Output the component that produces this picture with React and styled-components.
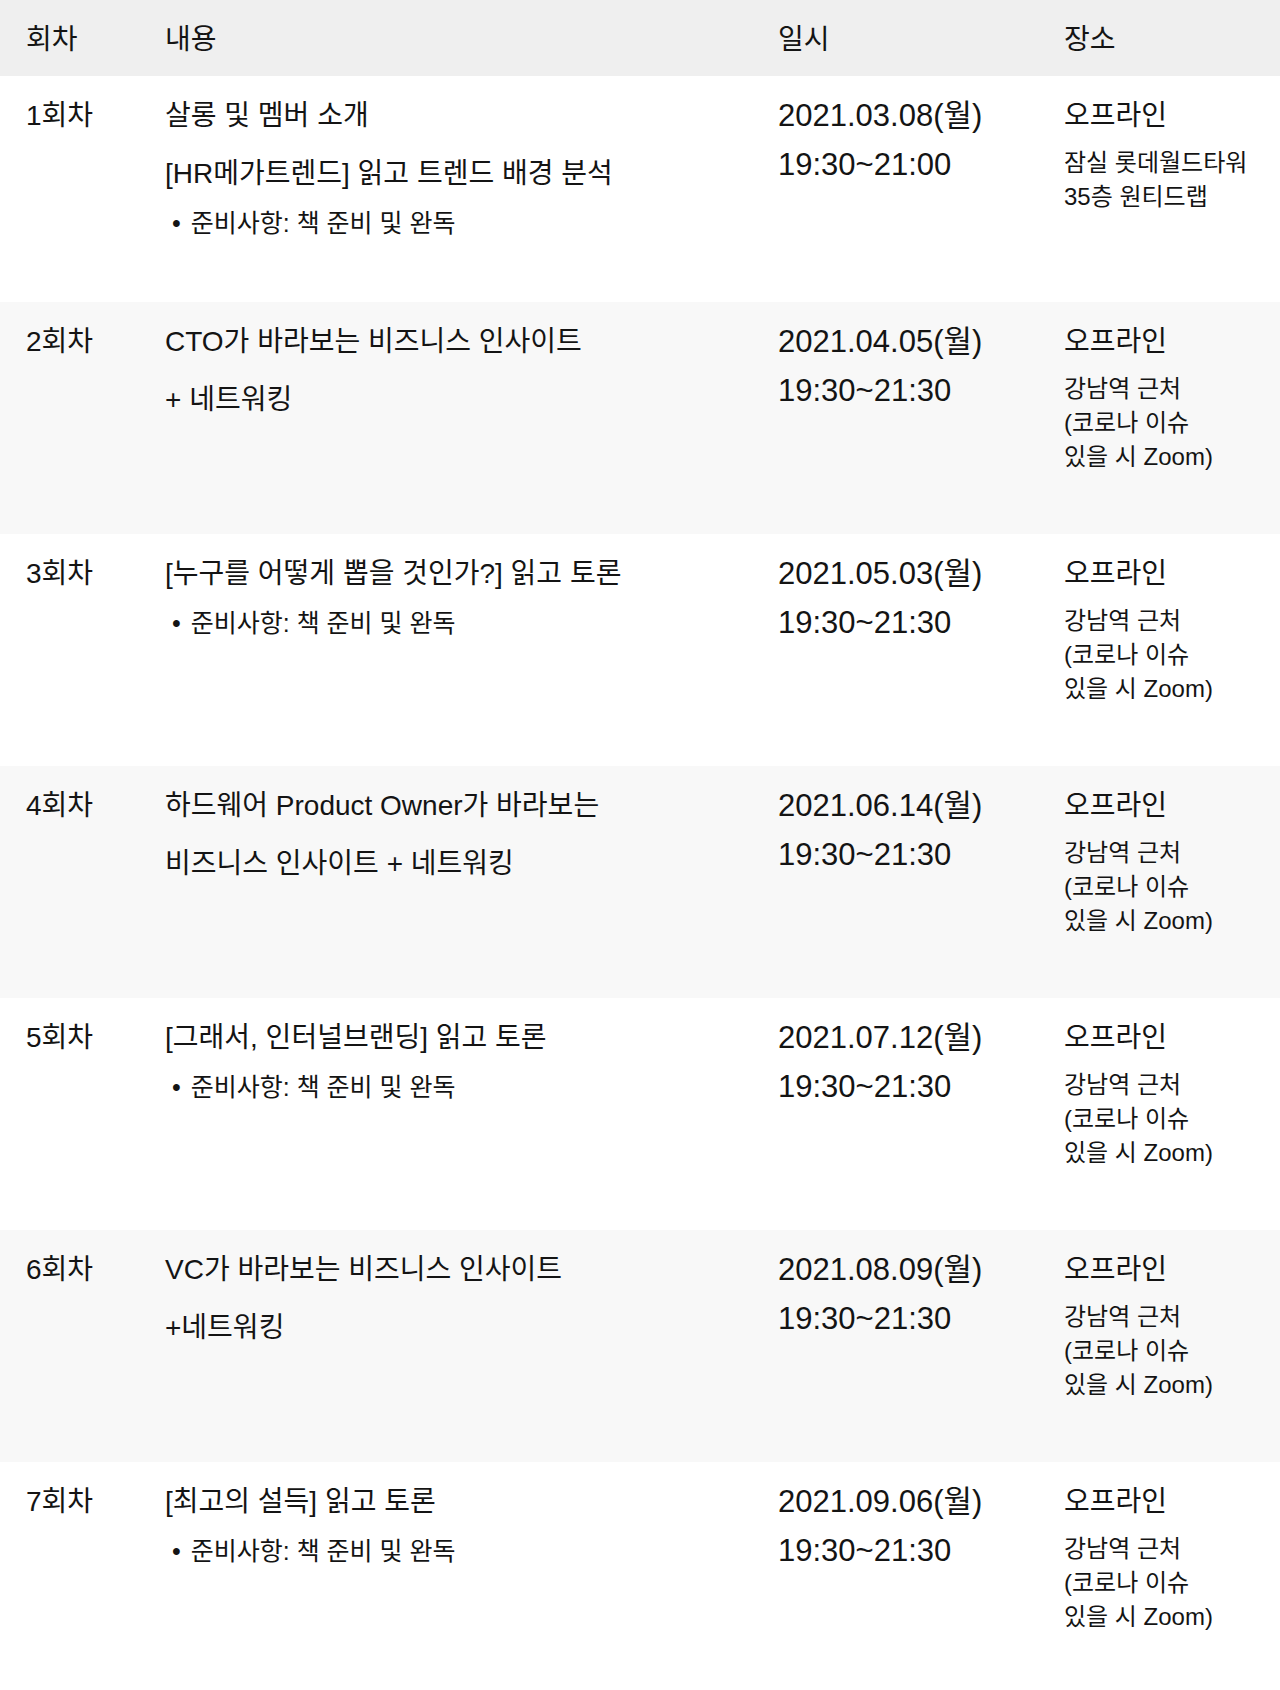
import React from "react";
import styled, { createGlobalStyle } from "styled-components";

const Global = createGlobalStyle`
  html, body { margin: 0; padding: 0; background: #ffffff; }
  body {
    font-family: "Liberation Sans", "Noto Sans CJK KR", sans-serif;
    color: #141414;
    -webkit-font-smoothing: antialiased;
  }
`;

const Table = styled.div`
  width: 1280px;
  display: flex;
  flex-direction: column;
`;

const cols = `139px 613px 286px 1fr`;

const HeadRow = styled.div`
  display: grid;
  grid-template-columns: ${cols};
  padding: 24px 0 20px 26px;
  background: #efefef;
`;

const HeadCell = styled.div`
  font-size: 28px;
  line-height: 32px;
`;

const Row = styled.div`
  display: grid;
  grid-template-columns: ${cols};
  padding: 24px 0 60px 26px;
  background: ${(p) => (p.$alt ? "#f8f8f8" : "#ffffff")};
`;

const Cell = styled.div`
  display: flex;
  flex-direction: column;
`;

const Round = styled.div`
  font-size: 28px;
  line-height: 32px;
`;

const TitleLine = styled.div`
  font-size: 28px;
  line-height: 32px;
  white-space: nowrap;
  & + & { margin-top: 26px; }
`;

const Note = styled.div`
  font-size: 25px;
  line-height: 32px;
  margin-top: 17px;
  margin-bottom: 3px;
  padding-left: 7px;
  white-space: nowrap;
  &::before {
    content: "•";
    margin-right: 10px;
  }
`;

const DateLine = styled.div`
  font-size: 31px;
  line-height: 32px;
  white-space: nowrap;
  & + & { margin-top: 17px; }
`;

const Place = styled.div`
  font-size: 28px;
  line-height: 32px;
  margin-bottom: 14px;
`;

const PlaceLine = styled.div`
  font-size: 24px;
  line-height: 34px;
  white-space: nowrap;
`;

const gangnam = ["강남역 근처", "(코로나 이슈", "있을 시 Zoom)"];
const note = "준비사항: 책 준비 및 완독";

const rows = [
  {
    round: "1회차",
    title: ["살롱 및 멤버 소개", "[HR메가트렌드] 읽고 트렌드 배경 분석"],
    note,
    date: "2021.03.08(월)",
    time: "19:30~21:00",
    place: ["잠실 롯데월드타워", "35층 원티드랩"],
  },
  {
    round: "2회차",
    title: ["CTO가 바라보는 비즈니스 인사이트", "+ 네트워킹"],
    date: "2021.04.05(월)",
    time: "19:30~21:30",
    place: gangnam,
  },
  {
    round: "3회차",
    title: ["[누구를 어떻게 뽑을 것인가?] 읽고 토론"],
    note,
    date: "2021.05.03(월)",
    time: "19:30~21:30",
    place: gangnam,
  },
  {
    round: "4회차",
    title: ["하드웨어 Product Owner가 바라보는", "비즈니스 인사이트 + 네트워킹"],
    date: "2021.06.14(월)",
    time: "19:30~21:30",
    place: gangnam,
  },
  {
    round: "5회차",
    title: ["[그래서, 인터널브랜딩] 읽고 토론"],
    note,
    date: "2021.07.12(월)",
    time: "19:30~21:30",
    place: gangnam,
  },
  {
    round: "6회차",
    title: ["VC가 바라보는 비즈니스 인사이트", "+네트워킹"],
    date: "2021.08.09(월)",
    time: "19:30~21:30",
    place: gangnam,
  },
  {
    round: "7회차",
    title: ["[최고의 설득] 읽고 토론"],
    note,
    date: "2021.09.06(월)",
    time: "19:30~21:30",
    place: gangnam,
  },
];

export default function App() {
  return (
    <>
      <Global />
      <Table>
        <HeadRow>
          <HeadCell>회차</HeadCell>
          <HeadCell>내용</HeadCell>
          <HeadCell>일시</HeadCell>
          <HeadCell>장소</HeadCell>
        </HeadRow>
        {rows.map((r, i) => (
          <Row key={r.round} $alt={i % 2 === 1}>
            <Cell>
              <Round>{r.round}</Round>
            </Cell>
            <Cell>
              {r.title.map((t) => (
                <TitleLine key={t}>{t}</TitleLine>
              ))}
              {r.note && <Note>{r.note}</Note>}
            </Cell>
            <Cell>
              <DateLine>{r.date}</DateLine>
              <DateLine>{r.time}</DateLine>
            </Cell>
            <Cell>
              <Place>오프라인</Place>
              {r.place.map((p) => (
                <PlaceLine key={p}>{p}</PlaceLine>
              ))}
            </Cell>
          </Row>
        ))}
      </Table>
    </>
  );
}
